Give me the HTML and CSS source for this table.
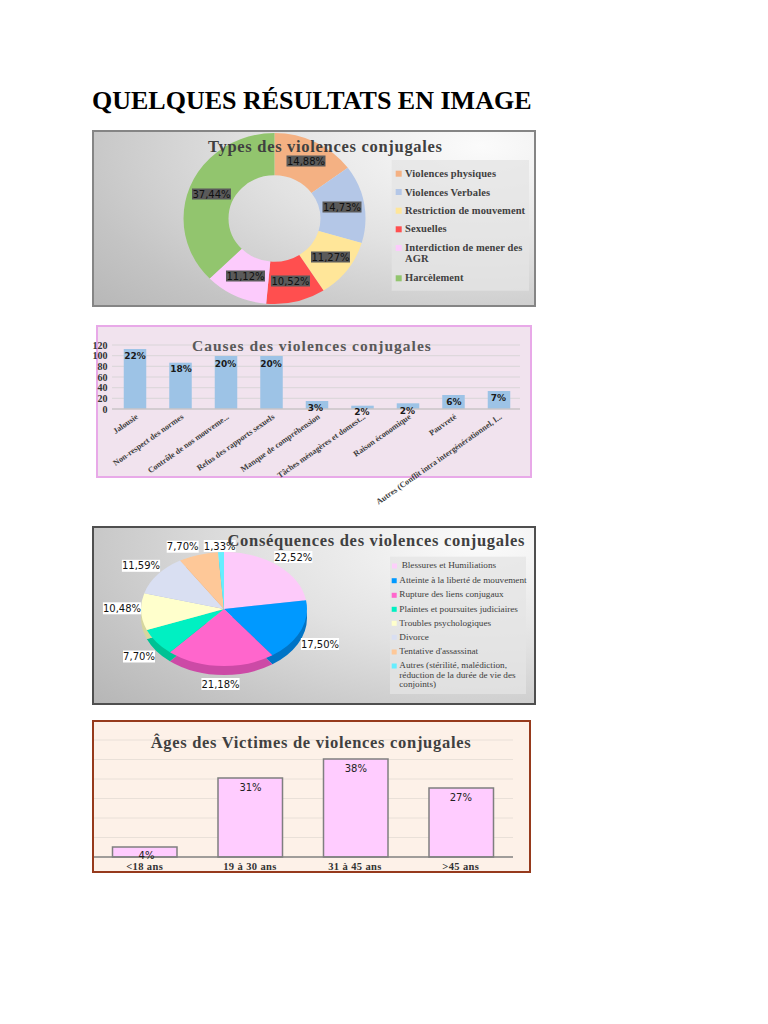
FILE: index.html
```html
<!DOCTYPE html>
<html lang="fr">
<head>
<meta charset="utf-8">
<title>Quelques résultats en image</title>
<link rel="stylesheet" href="styles.css">
</head>
<body>
<main class="page">
  <h1 class="heading">QUELQUES RÉSULTATS EN IMAGE</h1>

  <figure class="chart chart-types">
    <svg class="plot" viewBox="0 0 440 173" width="440" height="173">
      <g transform="translate(180.5 86.5) scale(1 0.94) rotate(-90)">
        <circle class="ring" r="68.5" stroke="#f4b183" stroke-dasharray="64.04 430.4" stroke-dashoffset="0"/>
        <circle class="ring" r="68.5" stroke="#b4c7e7" stroke-dasharray="63.40 430.4" stroke-dashoffset="-64.04"/>
        <circle class="ring" r="68.5" stroke="#ffe699" stroke-dasharray="48.51 430.4" stroke-dashoffset="-127.44"/>
        <circle class="ring" r="68.5" stroke="#ff4f4f" stroke-dasharray="45.28 430.4" stroke-dashoffset="-175.95"/>
        <circle class="ring" r="68.5" stroke="#fccbfc" stroke-dasharray="47.86 430.4" stroke-dashoffset="-221.23"/>
        <circle class="ring" r="68.5" stroke="#92c56e" stroke-dasharray="161.31 430.4" stroke-dashoffset="-269.09"/>
      </g>
      <g class="dark-tags">
        <rect x="192.5" y="23.5" width="39" height="11"/><text class="val" x="212" y="32.6">14,88%</text>
        <rect x="228.5" y="69.5" width="39" height="11"/><text class="val" x="248" y="78.6">14,73%</text>
        <rect x="217" y="119.5" width="39" height="11"/><text class="val" x="236.5" y="128.6">11,27%</text>
        <rect x="177" y="143.5" width="39" height="11"/><text class="val" x="196.5" y="152.6">10,52%</text>
        <rect x="132" y="138.5" width="39" height="11"/><text class="val" x="151.5" y="147.6">11,12%</text>
        <rect x="98" y="56.5" width="39" height="11"/><text class="val" x="117.5" y="65.6">37,44%</text>
      </g>
      <text class="ctitle" x="114" y="20">Types des violences conjugales</text>
      <rect class="legend-box" x="297.7" y="28" width="137.3" height="130.7"/>
      <rect x="301.7" y="38.7" width="6" height="6" fill="#f4b183"/>
      <text class="leg-b" x="311" y="45.3">Violences physiques</text>
      <rect x="301.7" y="57" width="6" height="6" fill="#b4c7e7"/>
      <text class="leg-b" x="311" y="63.7">Violences Verbales</text>
      <rect x="301.7" y="75.7" width="6" height="6" fill="#ffe699"/>
      <text class="leg-b" x="311" y="82.3">Restriction de mouvement</text>
      <rect x="301.7" y="94.3" width="6" height="6" fill="#ff4f4f"/>
      <text class="leg-b" x="311" y="100.3">Sexuelles</text>
      <rect x="301.7" y="113" width="6" height="6" fill="#fccbfc"/>
      <text class="leg-b" x="311" y="119">Interdiction de mener des</text>
      <text class="leg-b" x="311" y="129.7">AGR</text>
      <rect x="301.7" y="143.3" width="6" height="6" fill="#92c56e"/>
      <text class="leg-b" x="311" y="149">Harcèlement</text>
    </svg>
  </figure>

  <figure class="chart chart-causes">
    <svg class="plot" viewBox="0 0 432 149" width="432" height="149">
      <g class="grid">
        <line x1="14" y1="18" x2="422" y2="18"/>
        <line x1="14" y1="28.7" x2="422" y2="28.7"/>
        <line x1="14" y1="39.3" x2="422" y2="39.3"/>
        <line x1="14" y1="50" x2="422" y2="50"/>
        <line x1="14" y1="60.7" x2="422" y2="60.7"/>
        <line x1="14" y1="71.3" x2="422" y2="71.3"/>
      </g>
      <text class="ctitle ctitle-causes" x="94" y="24">Causes des violences conjugales</text>
      <g class="yax">
        <text x="9.5" y="21.5">120</text>
        <text x="9.5" y="32.2">100</text>
        <text x="9.5" y="42.8">80</text>
        <text x="9.5" y="53.5">60</text>
        <text x="9.5" y="64.2">40</text>
        <text x="9.5" y="74.8">20</text>
        <text x="9.5" y="85.5">0</text>
      </g>
      <g class="bars-blue">
        <rect x="25.75" y="22" width="22.5" height="60"/>
        <rect x="71.25" y="35.7" width="22.5" height="46.3"/>
        <rect x="116.75" y="29" width="22.5" height="53"/>
        <rect x="162.25" y="29" width="22.5" height="53"/>
        <rect x="207.75" y="74" width="22.5" height="8"/>
        <rect x="253.25" y="78.7" width="22.5" height="3.3"/>
        <rect x="298.75" y="76.3" width="22.5" height="5.7"/>
        <rect x="344.25" y="68" width="22.5" height="14"/>
        <rect x="389.75" y="64" width="22.5" height="18"/>
      </g>
      <line class="base-causes" x1="14" y1="82" x2="422" y2="82"/>
      <g class="bval">
        <text x="37" y="32">22%</text>
        <text x="83" y="45">18%</text>
        <text x="127.5" y="39.5">20%</text>
        <text x="173" y="39.5">20%</text>
        <text x="217.5" y="84">3%</text>
        <text x="264" y="88">2%</text>
        <text x="309.5" y="87">2%</text>
        <text x="356" y="78">6%</text>
        <text x="400.5" y="73.5">7%</text>
      </g>
      <g class="cat">
        <text transform="translate(40.5 91) rotate(-35)">Jalousie</text>
        <text transform="translate(86 91) rotate(-35)">Non-respect des normes</text>
        <text transform="translate(131.5 91) rotate(-35)">Contrôle de nos mouveme...</text>
        <text transform="translate(177 91) rotate(-35)">Refus des rapports sexuels</text>
        <text transform="translate(222.5 91) rotate(-35)">Manque de compréhension</text>
        <text transform="translate(268 91) rotate(-35)">Tâches ménagères et domest...</text>
        <text transform="translate(313.5 91) rotate(-35)">Raison économique</text>
        <text transform="translate(359 91) rotate(-35)">Pauvreté</text>
        <text transform="translate(404.5 91) rotate(-35)">Autres (Conflit intra intergénérationnel, l...</text>
      </g>
    </svg>
  </figure>

  <figure class="chart chart-conseq">
    <svg class="plot" viewBox="0 0 440 175" width="440" height="175">
      <g transform="translate(130 90) scale(1 0.687) rotate(-90)">
        <circle class="slice" r="41.5" stroke="#d9a6d9" stroke-dasharray="58.72 260.75" stroke-dashoffset="0"/>
        <circle class="slice" r="41.5" stroke="#0074c6" stroke-dasharray="45.63 260.75" stroke-dashoffset="-58.72"/>
        <circle class="slice" r="41.5" stroke="#cc4aa6" stroke-dasharray="55.23 260.75" stroke-dashoffset="-104.35"/>
        <circle class="slice" r="41.5" stroke="#00c294" stroke-dasharray="20.08 260.75" stroke-dashoffset="-159.58"/>
        <circle class="slice" r="41.5" stroke="#d6d69e" stroke-dasharray="27.33 260.75" stroke-dashoffset="-179.66"/>
        <circle class="slice" r="41.5" stroke="#aab3cc" stroke-dasharray="30.22 260.75" stroke-dashoffset="-206.99"/>
        <circle class="slice" r="41.5" stroke="#d9a070" stroke-dasharray="20.08 260.75" stroke-dashoffset="-237.21"/>
        <circle class="slice" r="41.5" stroke="#33bfd9" stroke-dasharray="3.46 260.75" stroke-dashoffset="-257.29"/>
      </g>
      <g transform="translate(130 81) scale(1 0.687) rotate(-90)">
        <circle class="slice" r="41.5" stroke="#fdcafa" stroke-dasharray="58.72 260.75" stroke-dashoffset="0"/>
        <circle class="slice" r="41.5" stroke="#0099ff" stroke-dasharray="45.63 260.75" stroke-dashoffset="-58.72"/>
        <circle class="slice" r="41.5" stroke="#ff66cc" stroke-dasharray="55.23 260.75" stroke-dashoffset="-104.35"/>
        <circle class="slice" r="41.5" stroke="#00f0c2" stroke-dasharray="20.08 260.75" stroke-dashoffset="-159.58"/>
        <circle class="slice" r="41.5" stroke="#ffffcc" stroke-dasharray="27.33 260.75" stroke-dashoffset="-179.66"/>
        <circle class="slice" r="41.5" stroke="#d9dff2" stroke-dasharray="30.22 260.75" stroke-dashoffset="-206.99"/>
        <circle class="slice" r="41.5" stroke="#fec898" stroke-dasharray="20.08 260.75" stroke-dashoffset="-237.21"/>
        <circle class="slice" r="41.5" stroke="#66eeff" stroke-dasharray="3.46 260.75" stroke-dashoffset="-257.29"/>
      </g>
      <g class="white-tags">
        <rect x="180.2" y="23" width="38.2" height="12"/><text class="val" x="199.3" y="32.6">22,52%</text>
        <rect x="206.9" y="110" width="38.2" height="12"/><text class="val" x="226" y="119.6">17,50%</text>
        <rect x="107.4" y="150" width="38.2" height="12"/><text class="val" x="126.5" y="159.6">21,18%</text>
        <rect x="29" y="122.5" width="32" height="12"/><text class="val" x="45" y="132.1">7,70%</text>
        <rect x="8.9" y="74.3" width="38.2" height="12"/><text class="val" x="28" y="83.9">10,48%</text>
        <rect x="27.9" y="31.8" width="38.2" height="12"/><text class="val" x="47" y="41.4">11,59%</text>
        <rect x="72.7" y="12.7" width="32" height="12"/><text class="val" x="88.7" y="22.3">7,70%</text>
        <rect x="109.7" y="12" width="32" height="12"/><text class="val" x="125.7" y="21.6">1,33%</text>
      </g>
      <text class="ctitle" x="133.5" y="18">Conséquences des violences conjugales</text>
      <rect class="legend-box" x="296" y="28.7" width="136" height="137.3"/>
      <rect x="298" y="35.5" width="5" height="5" fill="#fdd0fb"/>
      <text class="leg-r" x="307.7" y="40.3">Blessures et Humiliations</text>
      <rect x="297.7" y="50.2" width="5" height="5" fill="#0099ff"/>
      <text class="leg-r" x="305.3" y="54.7">Atteinte à la liberté de mouvement</text>
      <rect x="297.7" y="64.8" width="5" height="5" fill="#ff66cc"/>
      <text class="leg-r" x="305.3" y="69.3">Rupture des liens conjugaux</text>
      <rect x="297.7" y="78.8" width="5" height="5" fill="#00f0c2"/>
      <text class="leg-r" x="305.3" y="83.7">Plaintes et poursuites judiciaires</text>
      <rect x="297.7" y="92.8" width="5" height="5" fill="#ffffcc"/>
      <text class="leg-r" x="305.3" y="98">Troubles psychologiques</text>
      <rect x="297.7" y="106.8" width="5" height="5" fill="#d9dff2"/>
      <text class="leg-r" x="305.3" y="112">Divorce</text>
      <rect x="297.7" y="121.5" width="5" height="5" fill="#fec898"/>
      <text class="leg-r" x="305.3" y="126.3">Tentative d'assassinat</text>
      <rect x="297.7" y="135.5" width="5" height="5" fill="#66eeff"/>
      <text class="leg-r" x="305.3" y="140.3">Autres (stérilité, malédiction,</text>
      <text class="leg-r" x="305.3" y="149.7">réduction de la durée de vie des</text>
      <text class="leg-r" x="305.3" y="158.7">conjoints)</text>
    </svg>
  </figure>

  <figure class="chart chart-ages">
    <svg class="plot" viewBox="0 0 435 149" width="435" height="149">
      <g class="grid-ages">
        <line x1="0" y1="18" x2="419" y2="18"/>
        <line x1="0" y1="37.5" x2="419" y2="37.5"/>
        <line x1="0" y1="57" x2="419" y2="57"/>
        <line x1="0" y1="76.5" x2="419" y2="76.5"/>
        <line x1="0" y1="96" x2="419" y2="96"/>
        <line x1="0" y1="115.5" x2="419" y2="115.5"/>
      </g>
      <text class="ctitle" x="56.7" y="25.5">Âges des Victimes de violences conjugales</text>
      <g class="bars-pink">
        <rect x="18.5" y="125" width="64.5" height="10"/>
        <rect x="124" y="56" width="64.5" height="79"/>
        <rect x="229.5" y="37" width="64.5" height="98"/>
        <rect x="335" y="66" width="64.5" height="69"/>
      </g>
      <line class="base-ages" x1="0" y1="135" x2="419" y2="135"/>
      <g class="aval">
        <text x="52.5" y="137">4%</text>
        <text x="156.5" y="69">31%</text>
        <text x="261.8" y="49.7">38%</text>
        <text x="366.8" y="79">27%</text>
      </g>
      <g class="acat">
        <text x="50.7" y="147.5">&lt;18 ans</text>
        <text x="156" y="147.5">19 à 30 ans</text>
        <text x="261" y="147.5">31 à 45 ans</text>
        <text x="366.8" y="147.5">&gt;45 ans</text>
      </g>
    </svg>
  </figure>
</main>
</body>
</html>
```

FILE: styles.css
```css
html, body {
  margin: 0;
  padding: 0;
  background: #ffffff;
}

.page {
  padding: 86px 0 40px 92px;
  font-family: "Liberation Serif", "Times New Roman", serif;
}

.heading {
  margin: 0 0 14px;
  font-size: 26px;
  line-height: 30px;
  font-weight: bold;
  color: #000000;
  white-space: nowrap;
}

.chart {
  margin: 0;
  box-sizing: border-box;
  border-style: solid;
  border-width: 2px;
}

.plot {
  display: block;
  overflow: visible;
}

.chart-types {
  width: 444px;
  height: 177px;
  margin-bottom: 18px;
  border-color: #858585;
  background: radial-gradient(ellipse 125% 150% at 88% 8%, #fbfbfb 0%, #e2e2e2 40%, #c4c4c4 75%, #b3b3b3 100%);
}

.chart-causes {
  width: 436px;
  height: 153px;
  margin: 0 0 48px 4px;
  border-color: #e8a9e8;
  background: #f1e3ee;
}

.chart-conseq {
  width: 444px;
  height: 179px;
  margin-bottom: 15px;
  border-color: #4f4f4f;
  background: radial-gradient(ellipse 125% 150% at 88% 8%, #fbfbfb 0%, #e2e2e2 40%, #c4c4c4 75%, #b1b1b1 100%);
}

.chart-ages {
  width: 439px;
  height: 153px;
  border-color: #963a1c;
  background: #fdf1e8;
}

/* SVG pieces */
.ring {
  fill: none;
  stroke-width: 45;
}

.slice {
  fill: none;
  stroke-width: 83;
}

.ctitle {
  font-family: "Liberation Serif", "Times New Roman", serif;
  font-weight: bold;
  font-size: 16.5px;
  letter-spacing: 0.7px;
  fill: #404040;
}

.ctitle-causes {
  font-size: 15.5px;
  letter-spacing: 1px;
  fill: #595959;
}

.val {
  font-family: "DejaVu Sans", Verdana, sans-serif;
  font-size: 10px;
  text-anchor: middle;
  fill: #111111;
}

.dark-tags rect {
  fill: #5a5a5a;
}

.white-tags rect {
  fill: #ffffff;
}

.legend-box {
  fill: #e4e4e4;
  fill-opacity: 0.75;
}

.leg-b {
  font-family: "Liberation Serif", "Times New Roman", serif;
  font-weight: bold;
  font-size: 10.5px;
  letter-spacing: 0.1px;
  fill: #404040;
}

.leg-r {
  font-family: "Liberation Serif", "Times New Roman", serif;
  font-size: 9.2px;
  fill: #404040;
}

.grid line {
  stroke: #d9d5d8;
  stroke-width: 1;
}

.base-causes {
  stroke: #c8c4c7;
  stroke-width: 1.5;
}

.yax text {
  font-family: "Liberation Serif", "Times New Roman", serif;
  font-weight: bold;
  font-size: 10px;
  text-anchor: end;
  fill: #333333;
}

.bars-blue rect {
  fill: #9dc3e6;
}

.bval text {
  font-family: "DejaVu Sans", Verdana, sans-serif;
  font-weight: bold;
  font-size: 9px;
  text-anchor: middle;
  fill: #1a1a1a;
}

.cat text {
  font-family: "Liberation Serif", "Times New Roman", serif;
  font-weight: bold;
  font-size: 8.2px;
  text-anchor: end;
  fill: #404040;
}

.grid-ages line {
  stroke: #e9e0d8;
  stroke-width: 1;
}

.base-ages {
  stroke: #808080;
  stroke-width: 1.5;
}

.bars-pink rect {
  fill: #ffccff;
  stroke: #7f7f7f;
  stroke-width: 1.5;
}

.aval text {
  font-family: "DejaVu Sans", Verdana, sans-serif;
  font-size: 10px;
  text-anchor: middle;
  fill: #222222;
}

.acat text {
  font-family: "Liberation Serif", "Times New Roman", serif;
  font-weight: bold;
  font-size: 10.5px;
  letter-spacing: 0.4px;
  text-anchor: middle;
  fill: #333333;
}
```
